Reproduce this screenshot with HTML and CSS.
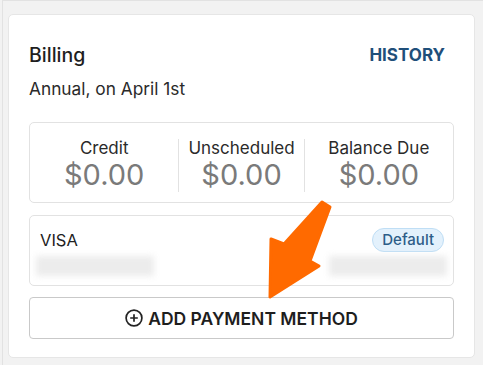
FILE: index.html
```html
<!DOCTYPE html>
<html>
<head>
<meta charset="utf-8">
<link rel="stylesheet" href="styles.css">
</head>
<body>
<div class="page">
  <div class="card">
    <div class="head">
      <div class="title">Billing</div>
      <a class="history">HISTORY</a>
    </div>
    <div class="sub">Annual, on April 1st</div>
    <div class="stats">
      <div class="stat">
        <div class="label">Credit</div>
        <div class="value">$0.00</div>
      </div>
      <div class="stat mid">
        <div class="label">Unscheduled</div>
        <div class="value">$0.00</div>
      </div>
      <div class="stat">
        <div class="label">Balance Due</div>
        <div class="value">$0.00</div>
      </div>
    </div>
    <div class="method">
      <div class="method-row">
        <span class="brand">VISA</span>
        <span class="badge">Default</span>
      </div>
      <div class="blur-row">
        <span class="blur left"></span>
        <span class="blur right"></span>
      </div>
    </div>
    <button class="add">
      <svg class="plus" width="18" height="18" viewBox="0 0 18 18"><circle cx="9" cy="9" r="7.9" fill="none" stroke="#222" stroke-width="1.7"/><path d="M9 5.2v7.6M5.2 9h7.6" stroke="#222" stroke-width="1.7" fill="none"/></svg>
      <span>ADD PAYMENT METHOD</span>
    </button>
  </div>
</div>
<svg class="arrow" width="483" height="365" viewBox="0 0 483 365">
  <polygon points="322,202 330,207 310,261 319,266 270,297 271,239 284,244" fill="#ff6a00" stroke="#ff6a00" stroke-width="3" stroke-linejoin="round"/>
</svg>
</body>
</html>
```

FILE: styles.css
```css
html, body {
  margin: 0;
  padding: 0;
  background: #f2f2f2;
}
body {
  font-family: Inter, "Liberation Sans", sans-serif;
  color: #222;
  width: 483px;
  height: 365px;
  overflow: hidden;
  position: relative;
}
.page {
  margin-left: 2px;
  border-left: 1px solid #e2e2e2;
  border-top: 1px solid #e2e2e2;
  padding: 13px 8px 0 5px;
  height: 352px;
}
.card {
  background: #fff;
  border: 1px solid #e6e6e6;
  border-radius: 5px;
  padding: 28px 20px 18px 20px;
  display: flex;
  flex-direction: column;
}
.head {
  display: flex;
  justify-content: space-between;
  align-items: center;
  height: 24px;
}
.title {
  font-size: 19.5px;
  font-weight: 500;
  line-height: 24px;
  color: #1e1e1e;
}
.history {
  font-size: 17px;
  font-weight: 700;
  color: #1f4f7a;
  margin-right: 9px;
}
.sub {
  margin-top: 12px;
  font-size: 17.3px;
  line-height: 20px;
  color: #2a2a2a;
}
.stats {
  margin-top: 23px;
  border: 1px solid #e2e2e2;
  border-radius: 5px;
  display: grid;
  grid-template-columns: 1fr auto 1fr;
  padding: 16px 0 10px;
}
.stat {
  display: flex;
  flex-direction: column;
  align-items: center;
}
.stat.mid {
  padding: 0 9px;
  border-left: 1px solid #e2e2e2;
  border-right: 1px solid #e2e2e2;
}
.label {
  font-size: 17px;
  line-height: 19px;
  color: #2a2a2a;
}
.value {
  font-size: 29px;
  line-height: 34px;
  color: #7a7a7a;
}
.method {
  margin-top: 12px;
  border: 1px solid #e2e2e2;
  border-radius: 5px;
  padding: 12px 0 9px;
}
.method-row {
  display: flex;
  justify-content: space-between;
  align-items: center;
  padding: 0 9px 0 10px;
  height: 24px;
}
.brand {
  font-size: 16.5px;
  line-height: 20px;
  color: #222;
}
.badge {
  font-size: 15px;
  font-weight: 500;
  color: #2d5d88;
  background: #e3f1fc;
  border: 1px solid #bfdef5;
  border-radius: 12px;
  padding: 0 9px;
  line-height: 22px;
}
.blur-row {
  margin-top: 4px;
  display: flex;
  justify-content: space-between;
  padding: 0 6px;
  height: 20px;
}
.blur {
  display: block;
  width: 118px;
  height: 20px;
  background: #ececec;
  filter: blur(3px);
}
.add {
  margin-top: 11px;
  height: 42px;
  border: 1px solid #c9c9c9;
  border-radius: 4px;
  background: #fff;
  display: flex;
  align-items: center;
  justify-content: center;
  gap: 5px;
  font-family: Inter, "Liberation Sans", sans-serif;
  font-size: 17.5px;
  font-weight: 600;
  color: #1e1e1e;
  padding: 0;
}
.plus {
  display: block;
}
.arrow {
  position: absolute;
  left: 0;
  top: 0;
  pointer-events: none;
}
```
